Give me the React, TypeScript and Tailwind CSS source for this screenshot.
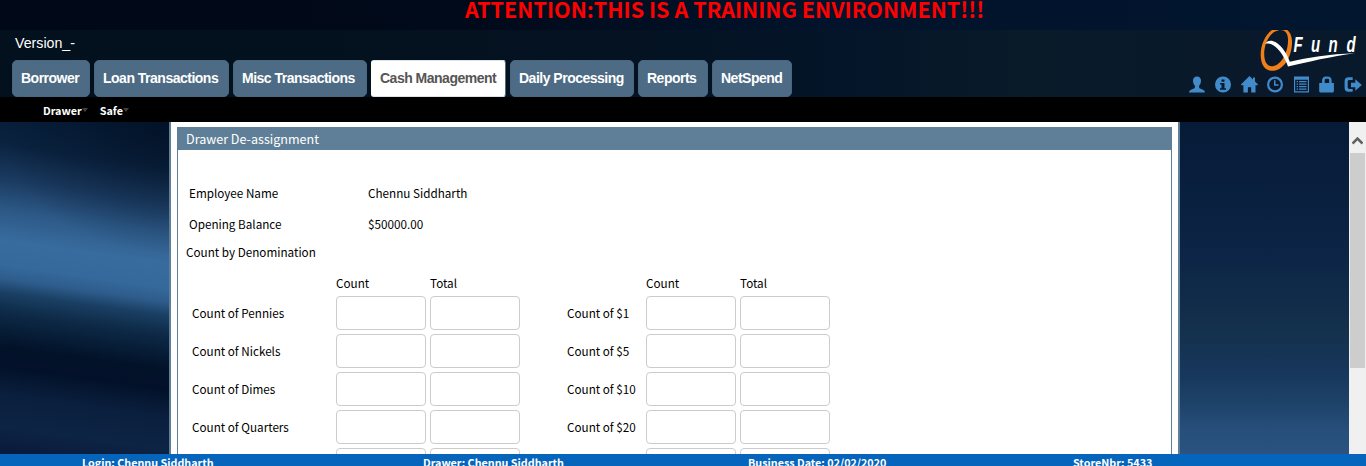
import React from 'react';

const tabs = [
  { label: 'Borrower', width: 'w-[78px]' },
  { label: 'Loan Transactions', width: 'w-[135px]' },
  { label: 'Misc Transactions', width: 'w-[134px]' },
  { label: 'Cash Management', width: 'w-[135px]', active: true },
  { label: 'Daily Processing', width: 'w-[124px]' },
  { label: 'Reports', width: 'w-[70px]' },
  { label: 'NetSpend', width: 'w-[80px]' },
];

const rows = [
  ['Count of Pennies', 'Count of $1'],
  ['Count of Nickels', 'Count of $5'],
  ['Count of Dimes', 'Count of $10'],
  ['Count of Quarters', 'Count of $20'],
];

const letters = [
  { char: 'F', place: 'translate(1293.5 51.5) scale(0.68 1)' },
  { char: 'u', place: 'translate(1311 51.5) scale(0.68 1)' },
  { char: 'n', place: 'translate(1328.5 51.5) scale(0.68 1)' },
  { char: 'd', place: 'translate(1346.5 51.5) scale(0.68 1)' },
];

function Logo() {
  return (
    <svg width="106" height="42" viewBox="1260 30 106 42" className="block">
      <path
        fillRule="evenodd"
        fill="#f07f1a"
        d="M1276 28C1284 26 1291.500 30 1292 41C1292.500 56 1284 70.800 1272 70.800C1264.500 70.800 1260.700 64 1260.700 55C1260.700 43 1267 31 1276 28ZM1278 30.500C1270 32 1264.200 43 1264.200 54C1264.200 62 1267.500 67 1273 66.200C1281.500 65 1288.500 52 1288 39C1287.700 32 1283.500 29 1278 30.500Z"
      />
      <path
        fill="#fff"
        d="M1265.200 43.800C1267 40 1272 39.800 1275.800 42.200C1282.500 46.500 1287 54 1289.800 61.800C1308 57.500 1329 54 1355 53.200C1331 56.500 1308 61.800 1288 66.500C1285 58 1280 49.500 1272.800 45C1270 43.200 1267.500 43.300 1265.200 43.800Z"
      />
      <g fill="#fff" fontFamily="Liberation Sans, sans-serif" fontWeight="700" fontStyle="italic" fontSize="22">
        {letters.map((l) => (
          <text key={l.char} transform={l.place}>
            {l.char}
          </text>
        ))}
      </g>
    </svg>
  );
}

function Icon({ children }: { children: React.ReactNode }) {
  return (
    <svg width="18" height="17" viewBox="0 0 18 17" fill="#428bca" className="block">
      {children}
    </svg>
  );
}

function Toolbar() {
  return (
    <div className="flex gap-[8px]">
      <Icon>
        <path d="M9 .5c2.600 0 4 1.700 4 4.200 0 2.300-.8 3.800-1.900 5v1.500c0 .8.600 1.100 1.600 1.500 2.600 1 4.300 1.800 4.300 3.800H1c0-2 1.700-2.800 4.300-3.800 1-.4 1.600-.7 1.600-1.500V9.700C5.800 8.500 5 7 5 4.700 5 2.200 6.400.5 9 .5z" />
      </Icon>
      <Icon>
        <path fillRule="evenodd" d="M9 .5a8 8 0 1 1 0 16 8 8 0 0 1 0-16zM7.500 3.500v2.200h3V3.500zM6 7v1.500h1.500v3.700H6v1.600h6v-1.600h-1.500V7z" />
      </Icon>
      <Icon>
        <path d="M9.500 0l8.500 8.500-.4.800h-2.100v7.200h-4.300v-5.200H7.900v5.200H3.400V9.300H1.300l-.4-.8zM13 1.500h2v4l-2-2z" />
      </Icon>
      <Icon>
        <path fillRule="evenodd" d="M9 .5a8 8 0 1 1 0 16 8 8 0 0 1 0-16zm0 2.200a5.800 5.800 0 1 0 0 11.600A5.800 5.800 0 0 0 9 2.700zM8 4.200h1.500v4h3v1.500H8z" />
      </Icon>
      <Icon>
        <path fillRule="evenodd" d="M2 .5h15v16H2zm1.200 3.200v11.600h12.600V3.700zM4.600 5H6v1.200H4.600zM7 5h7.500v1.200H7zM4.600 7.500H6v1.200H4.600zM7 7.500h7.500v1.200H7zM4.600 10H6v1.200H4.600zM7 10h7.500v1.200H7zM4.600 12.500H6v1.200H4.600zM7 12.500h7.500v1.200H7z" />
      </Icon>
      <Icon>
        <path fillRule="evenodd" d="M1.200 7h2.900V4.500c0-2.600 1.500-4 4-4h1.500c2.500 0 4 1.400 4 4V7h2.300v8.500l-1 1H2.200l-1-1zm5.500 0h4.500V4.300c0-1-.5-1.500-1.500-1.500H8.200c-1 0-1.500.5-1.500 1.500z" />
      </Icon>
      <Icon>
        <path d="M8.700 1.300v2.800H5.600c-1.300 0-1.900.6-1.900 1.900v5c0 1.300.6 1.900 1.900 1.900h3.100v2.800H4.600c-2.700 0-4-1.500-4-4V5.300c0-2.500 1.300-4 4-4zM11.300 3.300l6.500 5.700-6.500 5.700v-3.400H7V6.700h4.300z" />
      </Icon>
    </div>
  );
}

function Menu({ label }: { label: string }) {
  return (
    <div className="flex items-center">
      <span>{label}</span>
      <svg width="6" height="4" viewBox="0 0 6 4" className="block" fill="#3f3f3f">
        <path d="M0 0h6L3 4z" />
      </svg>
    </div>
  );
}

const boxClass = 'block h-[34px] w-[90px] rounded-[4px] border border-[#ccc] bg-white';

function CountGroup({ index, margin, labelWidth }: { index: number; margin: string; labelWidth: string }) {
  return (
    <div className={margin}>
      <div className="flex h-[20px] gap-[4px]">
        <div className={labelWidth} />
        <div className="w-[90px]">Count</div>
        <div className="w-[90px]">Total</div>
      </div>
      <div className="mt-[3px] flex flex-col gap-[4px]">
        {rows.map((row) => (
          <div key={row[index]} className="flex h-[34px] items-center gap-[4px]">
            <label className={labelWidth}>{row[index]}</label>
            <input className={boxClass} aria-label={row[index]} />
            <input className={boxClass} aria-label={row[index]} />
          </div>
        ))}
        <div className="flex h-[34px] items-center gap-[4px]">
          <div className={labelWidth} />
          <input className={boxClass} />
          <input className={boxClass} />
        </div>
      </div>
    </div>
  );
}

export default function App() {
  return (
    <div className="flex h-[466px] w-[1366px] flex-col overflow-hidden bg-[#03132a] font-['Noto_Sans_CJK_SC',sans-serif] text-[11.700px] leading-[20px] text-black">
      <div className="h-[30px] shrink-0 bg-[linear-gradient(90deg,#010818_0%,#010a1a_35%,#02132b_60%,#02162f_100%)] pl-[465px]">
        <div className="w-[540px] text-[21.550px] leading-[17px] font-bold whitespace-nowrap text-[#f00]">ATTENTION:THIS IS A TRAINING ENVIRONMENT!!!</div>
      </div>
      <div className="flex h-[67px] shrink-0 justify-between bg-[linear-gradient(90deg,#03101d_0%,#041221_45%,#041529_62%,#091a29_75%,#09192c_100%)]">
        <div className="pl-[12px] font-['Liberation_Sans',sans-serif]">
          <div className="h-[30px] pt-[3px] pl-[3px] text-[14.200px] leading-[20px] text-white">Version_-</div>
          <div className="flex gap-[4px]">
            {tabs.map((t) => (
              <div
                key={t.label}
                className={`h-[37px] border pt-[7px] pl-[8px] text-[14px] tracking-[-0.5px] font-bold whitespace-nowrap ${t.width} ${
                  t.active
                    ? 'rounded-[3px] border-t-[#dde3e8] border-r-[#4d6b84] border-b-[#dde3e8] border-l-white bg-white text-[#555]'
                    : 'rounded-[5px] border-[#486780] bg-[#4d6b84] text-white'
                }`}
              >
                {t.label}
              </div>
            ))}
          </div>
        </div>
        <div className="flex w-[178px] flex-col items-end">
          <Logo />
          <div className="mt-[4px] pr-[4px]">
            <Toolbar />
          </div>
        </div>
      </div>
      <div className="flex h-[25px] shrink-0 items-center gap-[12px] bg-black pt-px pl-[43px] text-[10.800px] font-bold text-white">
        <Menu label="Drawer" />
        <Menu label="Safe" />
      </div>
      <div className="flex h-[332px] shrink-0 overflow-hidden">
        <div className="w-[169px] bg-[radial-gradient(ellipse_170px_130px_at_100%_0%,rgba(1,12,30,0.600)_0%,rgba(1,12,30,0.250)_50%,transparent_100%),linear-gradient(188deg,#051a35_0px,#0a2340_45px,#1b3b61_80px,#2c5886_110px,#386c9e_140px,#35689b_165px,#2e5d8d_178px,#1a3f63_192px,#0d2946_212px,#021229_245px,#021129_265px,#0a1f3d_292px,#0e2445_325px,#08193a_352px)]" />
        <div className="h-[400px] w-[1011px] border-x-2 border-[#5f7f98] bg-white px-[6px] pt-[5px]">
          <div className="h-[395px] border border-[#5f7f98]">
            <div className="h-[22px] bg-[#5f7f98] pl-[8px] text-[12.550px] leading-[21px] text-white">Drawer De-assignment</div>
            <div className="mt-[33px] flex h-[20px] pl-[11px]">
              <div className="w-[179px]">Employee Name</div>
              <div>Chennu Siddharth</div>
            </div>
            <div className="mt-[11px] flex h-[20px] pl-[11px]">
              <div className="w-[179px]">Opening Balance</div>
              <div>$50000.00</div>
            </div>
            <div className="mt-[8px] h-[20px] pl-[8px]">Count by Denomination</div>
            <div className="mt-[11px] flex pl-[14px]">
              <CountGroup index={0} margin="" labelWidth="w-[140px]" />
              <CountGroup index={1} margin="ml-[47px]" labelWidth="w-[75px]" />
            </div>
          </div>
        </div>
        <div className="w-[169px] bg-[linear-gradient(180deg,#051b38_0%,#0a203f_25%,#0c2446_38%,#102b49_52%,#14314e_64%,#17375c_76%,#1d4268_84%,#274f7b_93%,#2b5280_100%)]" />
        <div className="flex w-[17px] flex-col items-center bg-[#f0f0f0]">
          <div className="flex h-[31px] items-center">
            <svg width="11" height="9" viewBox="0 0 11 9" className="mt-[6px] block" fill="none" stroke="#606060" strokeWidth="2.600">
              <path d="M.5 7.500l5-5 5 5" />
            </svg>
          </div>
          <div className="h-[215px] w-[15px] bg-[#cdcdcd]" />
        </div>
      </div>
      <div className="flex h-[12px] shrink-0 overflow-hidden bg-[#0565bd] pl-[82px] text-[10.750px] leading-[17px] font-bold whitespace-nowrap text-white">
        <div className="w-[341px]">Login: Chennu Siddharth</div>
        <div className="w-[325px]">Drawer: Chennu Siddharth</div>
        <div className="w-[325px]">Business Date: 02/02/2020</div>
        <div>StoreNbr: 5433</div>
      </div>
    </div>
  );
}
